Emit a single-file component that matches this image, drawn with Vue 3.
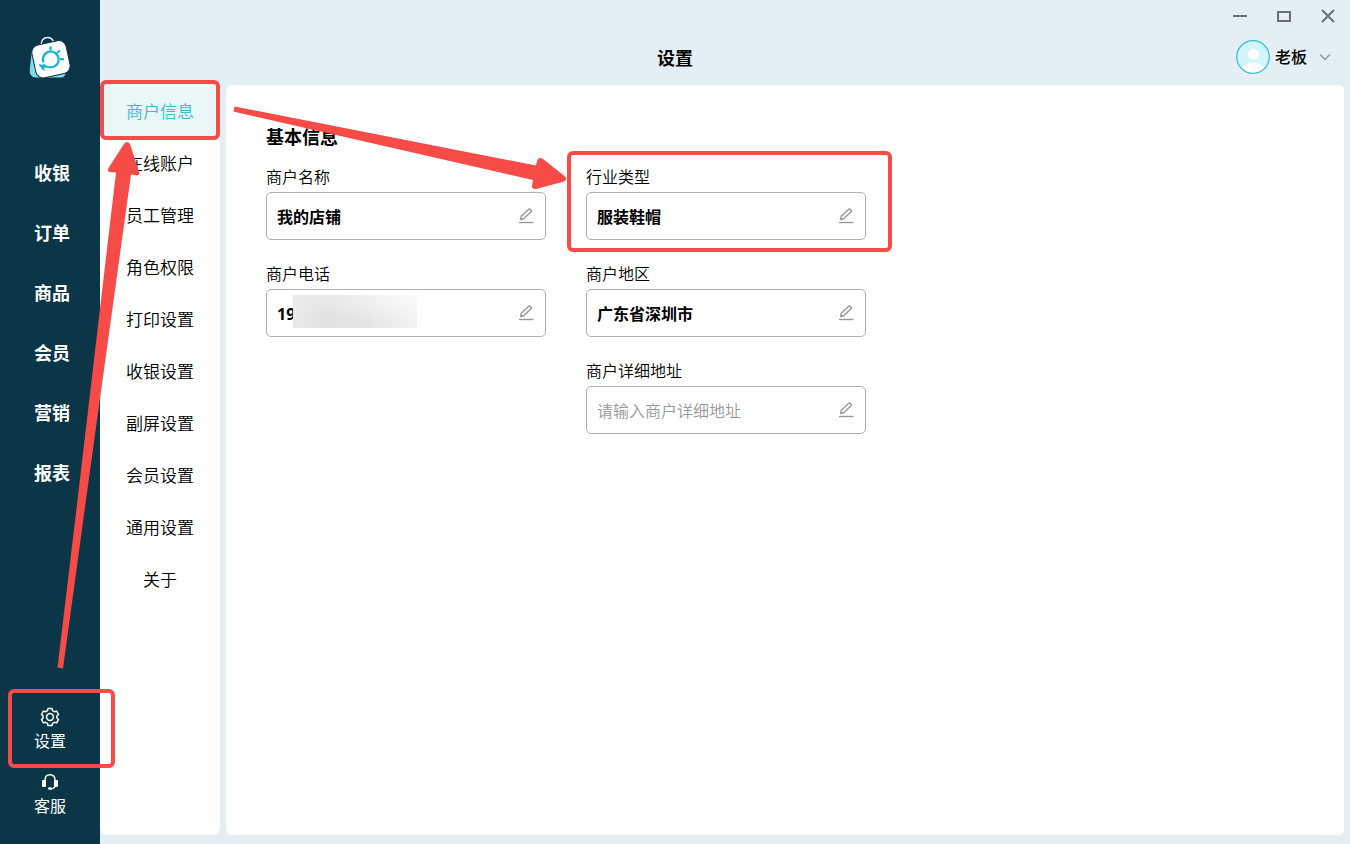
<script setup>
import { ref } from 'vue'

const navItems = ['收银', '订单', '商品', '会员', '营销', '报表']
const menuItems = [
  '商户信息', '在线账户', '员工管理', '角色权限', '打印设置',
  '收银设置', '副屏设置', '会员设置', '通用设置', '关于',
]
const activeMenu = ref('商户信息')

const fields = ref([
  { id: 'name', label: '商户名称', value: '我的店铺' },
  { id: 'industry', label: '行业类型', value: '服装鞋帽', marked: true },
  { id: 'phone', label: '商户电话', value: '19', masked: true },
  { id: 'region', label: '商户地区', value: '广东省深圳市' },
  { id: 'address', label: '商户详细地址', value: '', placeholder: '请输入商户详细地址' },
])
</script>

<template>
  <div class="app">
    <aside class="sidebar">
      <svg class="logo" width="44" height="44" viewBox="0 0 44 44" aria-hidden="true">
        <path d="M4 14 L1.800 33 Q1 41.500 8 41.500 H33 Q37 41.500 38 36 Z" fill="#7fdce6" />
        <path d="M13 9 Q13.500 1.500 19.500 1.500 Q24.500 1.500 26 7" fill="none" stroke="#e8f4f6" stroke-width="1.300" />
        <rect x="5.500" y="6.500" width="35" height="33.500" rx="7.500" transform="rotate(-12 23 23.200)" fill="#fff" stroke="#0b3648" stroke-width="1" />
        <g fill="none" stroke="#12b9cc" stroke-width="2.200">
          <path d="M15.500 26.500 A7.900 7.900 0 1 1 20.500 31 Q17.500 31 15 28.500" />
          <path d="M22.500 10.500 V14.500" />
          <path d="M29 17 L32 14.500" />
          <path d="M32 23.200 H36" />
        </g>
        <path d="M10.500 28 L15.500 29 L20 31 Q17.500 32 16 31.500 L17 35 Q14 33.500 13 31.500 Q11.500 30.500 10.500 28 Z" fill="#12b9cc" />
      </svg>
      <nav class="main-nav">
        <a v-for="item in navItems" :key="item" href="#">{{ item }}</a>
      </nav>
      <div class="tools">
        <button type="button" class="tool">
          <svg width="20" height="20" viewBox="0 0 20 20" fill="none" stroke="#fff" stroke-width="1.500" stroke-linejoin="round" aria-hidden="true">
            <path d="M8 1.500 H12 L12.600 3.700 L14.400 4.700 L16.600 4.100 L18.500 7.500 L16.900 9 V11 L18.500 12.500 L16.600 15.900 L14.400 15.300 L12.600 16.300 L12 18.500 H8 L7.400 16.300 L5.600 15.300 L3.400 15.900 L1.500 12.500 L3.100 11 V9 L1.500 7.500 L3.400 4.100 L5.600 4.700 L7.400 3.700 Z" />
            <circle cx="10" cy="10" r="3.400" />
          </svg>
          <span>设置</span>
          <i class="mark mark-tool"></i>
        </button>
        <button type="button" class="tool">
          <svg width="20" height="20" viewBox="0 0 20 20" aria-hidden="true">
            <path d="M5 9 V8 Q5 2.700 10 2.700 Q15 2.700 15 8 V9 M15.500 13 Q15 16.500 11 16.800" fill="none" stroke="#fff" stroke-width="1.400" />
            <rect x="2" y="8" width="4" height="7" rx="1" fill="#fff" />
            <rect x="14" y="8" width="4" height="7" rx="1" fill="#fff" />
            <rect x="8" y="15.300" width="4" height="2.500" rx="1.200" fill="#fff" />
          </svg>
          <span>客服</span>
        </button>
      </div>
    </aside>

    <div class="workspace">
      <header class="topbar">
        <div class="window-controls">
          <button type="button" aria-label="最小化">
            <svg width="16" height="16" viewBox="0 0 16 16"><path d="M1 8 H15" stroke="#6b7073" stroke-width="2" /></svg>
          </button>
          <button type="button" aria-label="最大化">
            <svg width="16" height="16" viewBox="0 0 16 16"><rect x="2" y="4" width="12" height="9" fill="none" stroke="#6b7073" stroke-width="2" /></svg>
          </button>
          <button type="button" aria-label="关闭">
            <svg width="16" height="16" viewBox="0 0 16 16"><path d="M2 2 L14 14 M14 2 L2 14" stroke="#6b7073" stroke-width="2" /></svg>
          </button>
        </div>
        <div class="title-row">
          <h1>设置</h1>
          <button type="button" class="user">
            <svg width="34" height="34" viewBox="0 0 34 34" aria-hidden="true">
              <defs>
                <clipPath id="avatar-clip"><circle cx="17" cy="17" r="15.500" /></clipPath>
              </defs>
              <circle cx="17" cy="17" r="16.300" fill="#d2f5f9" stroke="#39bfcd" stroke-width="1.200" />
              <circle cx="17.500" cy="14.300" r="5.500" fill="#fff" />
              <ellipse cx="17" cy="31" rx="12" ry="8.500" fill="#fff" clip-path="url(#avatar-clip)" />
            </svg>
            <span>老板</span>
            <svg class="chevron" width="12" height="12" viewBox="0 0 12 12" aria-hidden="true">
              <path d="M1 3.500 L6 8.500 L11 3.500" fill="none" stroke="#8d979c" stroke-width="1.500" />
            </svg>
          </button>
        </div>
      </header>

      <div class="body">
        <nav class="submenu">
          <a
            v-for="item in menuItems"
            :key="item"
            href="#"
            :class="{ active: item === activeMenu }"
            @click.prevent="activeMenu = item"
          >{{ item }}<i v-if="item === '商户信息'" class="mark mark-menu"></i></a>
        </nav>

        <main class="card">
          <h2>基本信息</h2>
          <form class="fields" @submit.prevent>
            <div v-for="f in fields" :key="f.id" class="field" :class="f.id">
              <label :for="f.id">{{ f.label }}</label>
              <div class="control">
                <input :id="f.id" v-model="f.value" type="text" :placeholder="f.placeholder" />
                <span v-if="f.masked" class="mask"></span>
                <svg class="pencil" width="16" height="16" viewBox="0 0 16 16" fill="none" stroke="#999" aria-hidden="true">
                  <path d="M2.700 11.500 L3.300 8.200 L10.700 1.300 Q11.500 .700 12.300 1.500 L13 2.200 Q13.700 3 13 3.800 L5.700 10.700 Z" stroke-width="1.500" stroke-linejoin="round" />
                  <path d="M1 14.500 H15.500" stroke-width="1.400" />
                </svg>
              </div>
              <i v-if="f.marked" class="mark mark-field"></i>
            </div>
          </form>
        </main>
      </div>
    </div>

    <svg class="arrows" width="600" height="680" viewBox="0 0 600 680" fill="#f64b47" aria-hidden="true">
      <path d="M57.500 667.500 L63 668.500 L86 500 L131 174.500 L137 175.500 Q140.500 175 139 171.500 L130 144 Q127 140 124 144 L108.500 168 Q106.500 171.500 110 172 L116 172.500 L77.500 500 Z" />
      <path d="M234.500 106.500 L233.500 111.500 L533 180 L532 186 Q532 189.500 536 189 L564 181.500 Q568 179 564.500 176 L543 159 Q538.500 156.500 537 161 L536 165.500 Z" />
    </svg>
  </div>
</template>

<style>
body {
  margin: 0;
}
</style>

<style scoped>
.app {
  position: relative;
  display: flex;
  min-height: 100vh;
  background: #e4eff5;
  color: #000;
  font-family: "Noto Sans", "Noto Sans CJK SC", sans-serif;
  font-size: 16px;
  line-height: 24px;
}
button {
  padding: 0;
  border: 0;
  background: none;
  color: inherit;
  font: inherit;
  cursor: pointer;
}
a {
  color: inherit;
  text-decoration: none;
}
.sidebar {
  display: flex;
  flex: 0 0 100px;
  flex-direction: column;
  box-sizing: border-box;
  padding: 36px 0 26px;
  background: #0b3648;
  color: #fff;
}
.logo {
  align-self: center;
}
.main-nav {
  display: flex;
  flex-direction: column;
  margin-top: 63px;
}
.main-nav a {
  padding-left: 34px;
  font-size: 18px;
  font-weight: 700;
  line-height: 60px;
}
.tools {
  display: flex;
  flex-direction: column;
  gap: 19px;
  margin-top: auto;
}
.tool {
  position: relative;
  display: flex;
  flex-direction: column;
  align-items: center;
  gap: 2px;
}
.mark {
  position: absolute;
  border: 4px solid #f64b47;
  border-radius: 6px;
  pointer-events: none;
}
.mark-tool {
  inset: -18px -15px -15px 8px;
}
.mark-menu {
  inset: -6px 0 -2px;
}
.mark-field {
  inset: -14px -26px -12px -19px;
}
.workspace {
  display: flex;
  flex: 1;
  flex-direction: column;
}
.topbar {
  height: 85px;
}
.window-controls {
  display: flex;
  justify-content: flex-end;
  align-items: center;
  gap: 28px;
  height: 32px;
  padding-right: 14px;
}
.window-controls svg {
  display: block;
}
.title-row {
  display: grid;
  grid-template-columns: 1fr auto 1fr;
  align-items: center;
  height: 50px;
  padding-right: 19px;
}
h1 {
  grid-column: 2;
  margin: 0 81px 0 0;
  padding-top: 2px;
  font-size: 18px;
  line-height: 24px;
}
.user {
  display: flex;
  justify-self: end;
  align-items: center;
  font-weight: 500;
}
.user span {
  margin: 0 12px 0 5px;
}
.body {
  display: flex;
  flex: 1;
  gap: 6px;
  padding: 0 6px 9px 0;
}
.submenu {
  flex: 0 0 120px;
  box-sizing: border-box;
  padding-top: 1px;
  border-radius: 8px;
  background: #fff;
}
.submenu a {
  position: relative;
  display: block;
  font-size: 17px;
  font-weight: 350;
  line-height: 52px;
  text-align: center;
}
.submenu .active {
  background: #e9f7f8;
  color: #36bccb;
}
.card {
  flex: 1;
  padding: 38px 40px;
  border-radius: 6px;
  background: #fff;
}
h2 {
  margin: 0 0 14px;
  font-size: 18px;
  line-height: 28px;
}
.fields {
  display: grid;
  grid-template-columns: 280px 280px;
  gap: 22px 40px;
}
.field {
  position: relative;
}
.address {
  grid-column: 2;
}
.field label {
  display: block;
  margin-bottom: 3px;
  font-weight: 350;
}
.control {
  position: relative;
  display: flex;
  align-items: center;
  box-sizing: border-box;
  height: 48px;
  padding: 0 11px 0 10px;
  border: 1px solid #b0b0b0;
  border-radius: 5px;
}
.control input {
  flex: 1;
  min-width: 0;
  padding: 2px 0 0;
  border: 0;
  outline: 0;
  background: none;
  color: #000;
  font: inherit;
  font-weight: 700;
}
.control input::placeholder {
  color: #999;
  font-weight: 350;
}
.mask {
  position: absolute;
  top: 5px;
  left: 26px;
  width: 124px;
  height: 33px;
  background:
    radial-gradient(ellipse at 100% 0, #fafafa, rgba(250, 250, 250, 0) 65%),
    linear-gradient(100deg, #ebebeb, #e2e2e2 30%, #e4e4e4 60%, #f3f3f3);
}
.arrows {
  position: absolute;
  top: 0;
  left: 0;
  pointer-events: none;
}
</style>
